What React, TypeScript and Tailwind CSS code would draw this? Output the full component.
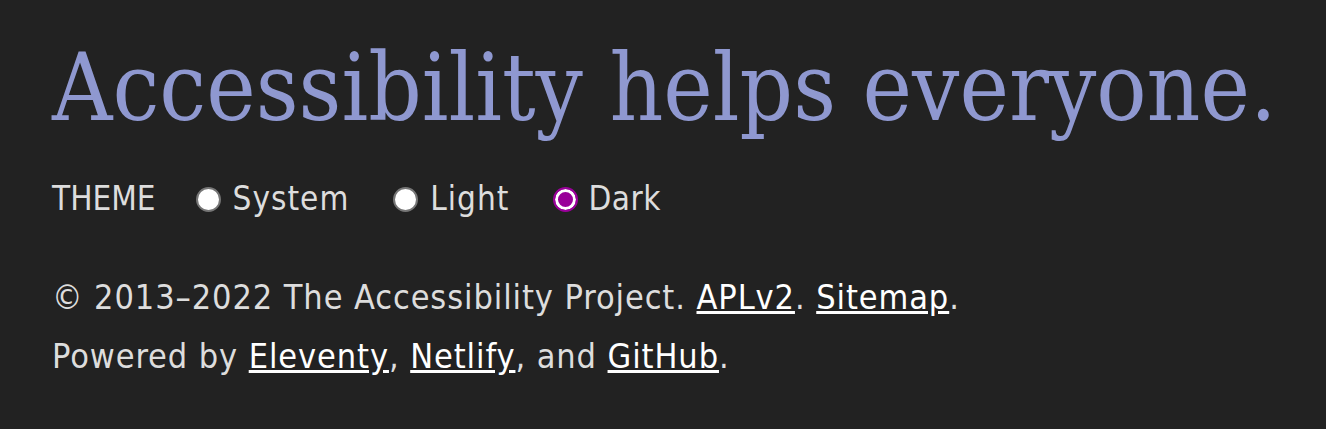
export default function App() {
  return (
    <div className="min-h-[429px] w-full bg-[#222222] px-[52px] pt-[38px]">
      <h1 className="text-[#8f98d0] text-[93px] leading-[100px] font-normal font-['DejaVu_Serif',serif] [font-stretch:condensed] whitespace-nowrap">
        Accessibility helps everyone.
      </h1>
      <div className="mt-[41px] flex items-center text-[#dddddd] text-[33px] leading-[40px] font-['DejaVu_Sans',sans-serif] [font-stretch:condensed]">
        <span>THEME</span>
        <label className="ml-[40px] flex items-center gap-[12px] tracking-[1px]">
          <span className="w-[25px] h-[25px] rounded-full bg-white border-2 border-[#767676]" />
          System
        </label>
        <label className="ml-[44px] flex items-center gap-[12px] tracking-[1px]">
          <span className="w-[25px] h-[25px] rounded-full bg-white border-2 border-[#767676]" />
          Light
        </label>
        <label className="ml-[44px] flex items-center gap-[10px] tracking-[0.5px]">
          <span className="w-[25px] h-[25px] rounded-full bg-[#990099] border-[2px] border-[#990099] shadow-[inset_0_0_0_3px_white]" />
          Dark
        </label>
      </div>
      <div className="mt-[49px] text-[#dddddd] text-[34px] leading-[59px] tracking-[0.9px] font-['DejaVu_Sans',sans-serif] [font-stretch:condensed]">
        <p>
          © 2013–2022 The Accessibility Project. <a className="text-white underline">APLv2</a>.{" "}
          <a className="text-white underline">Sitemap</a>.
        </p>
        <p>
          Powered by <a className="text-white underline">Eleventy</a>, <a className="text-white underline">Netlify</a>, and{" "}
          <a className="text-white underline">GitHub</a>.
        </p>
      </div>
    </div>
  );
}
